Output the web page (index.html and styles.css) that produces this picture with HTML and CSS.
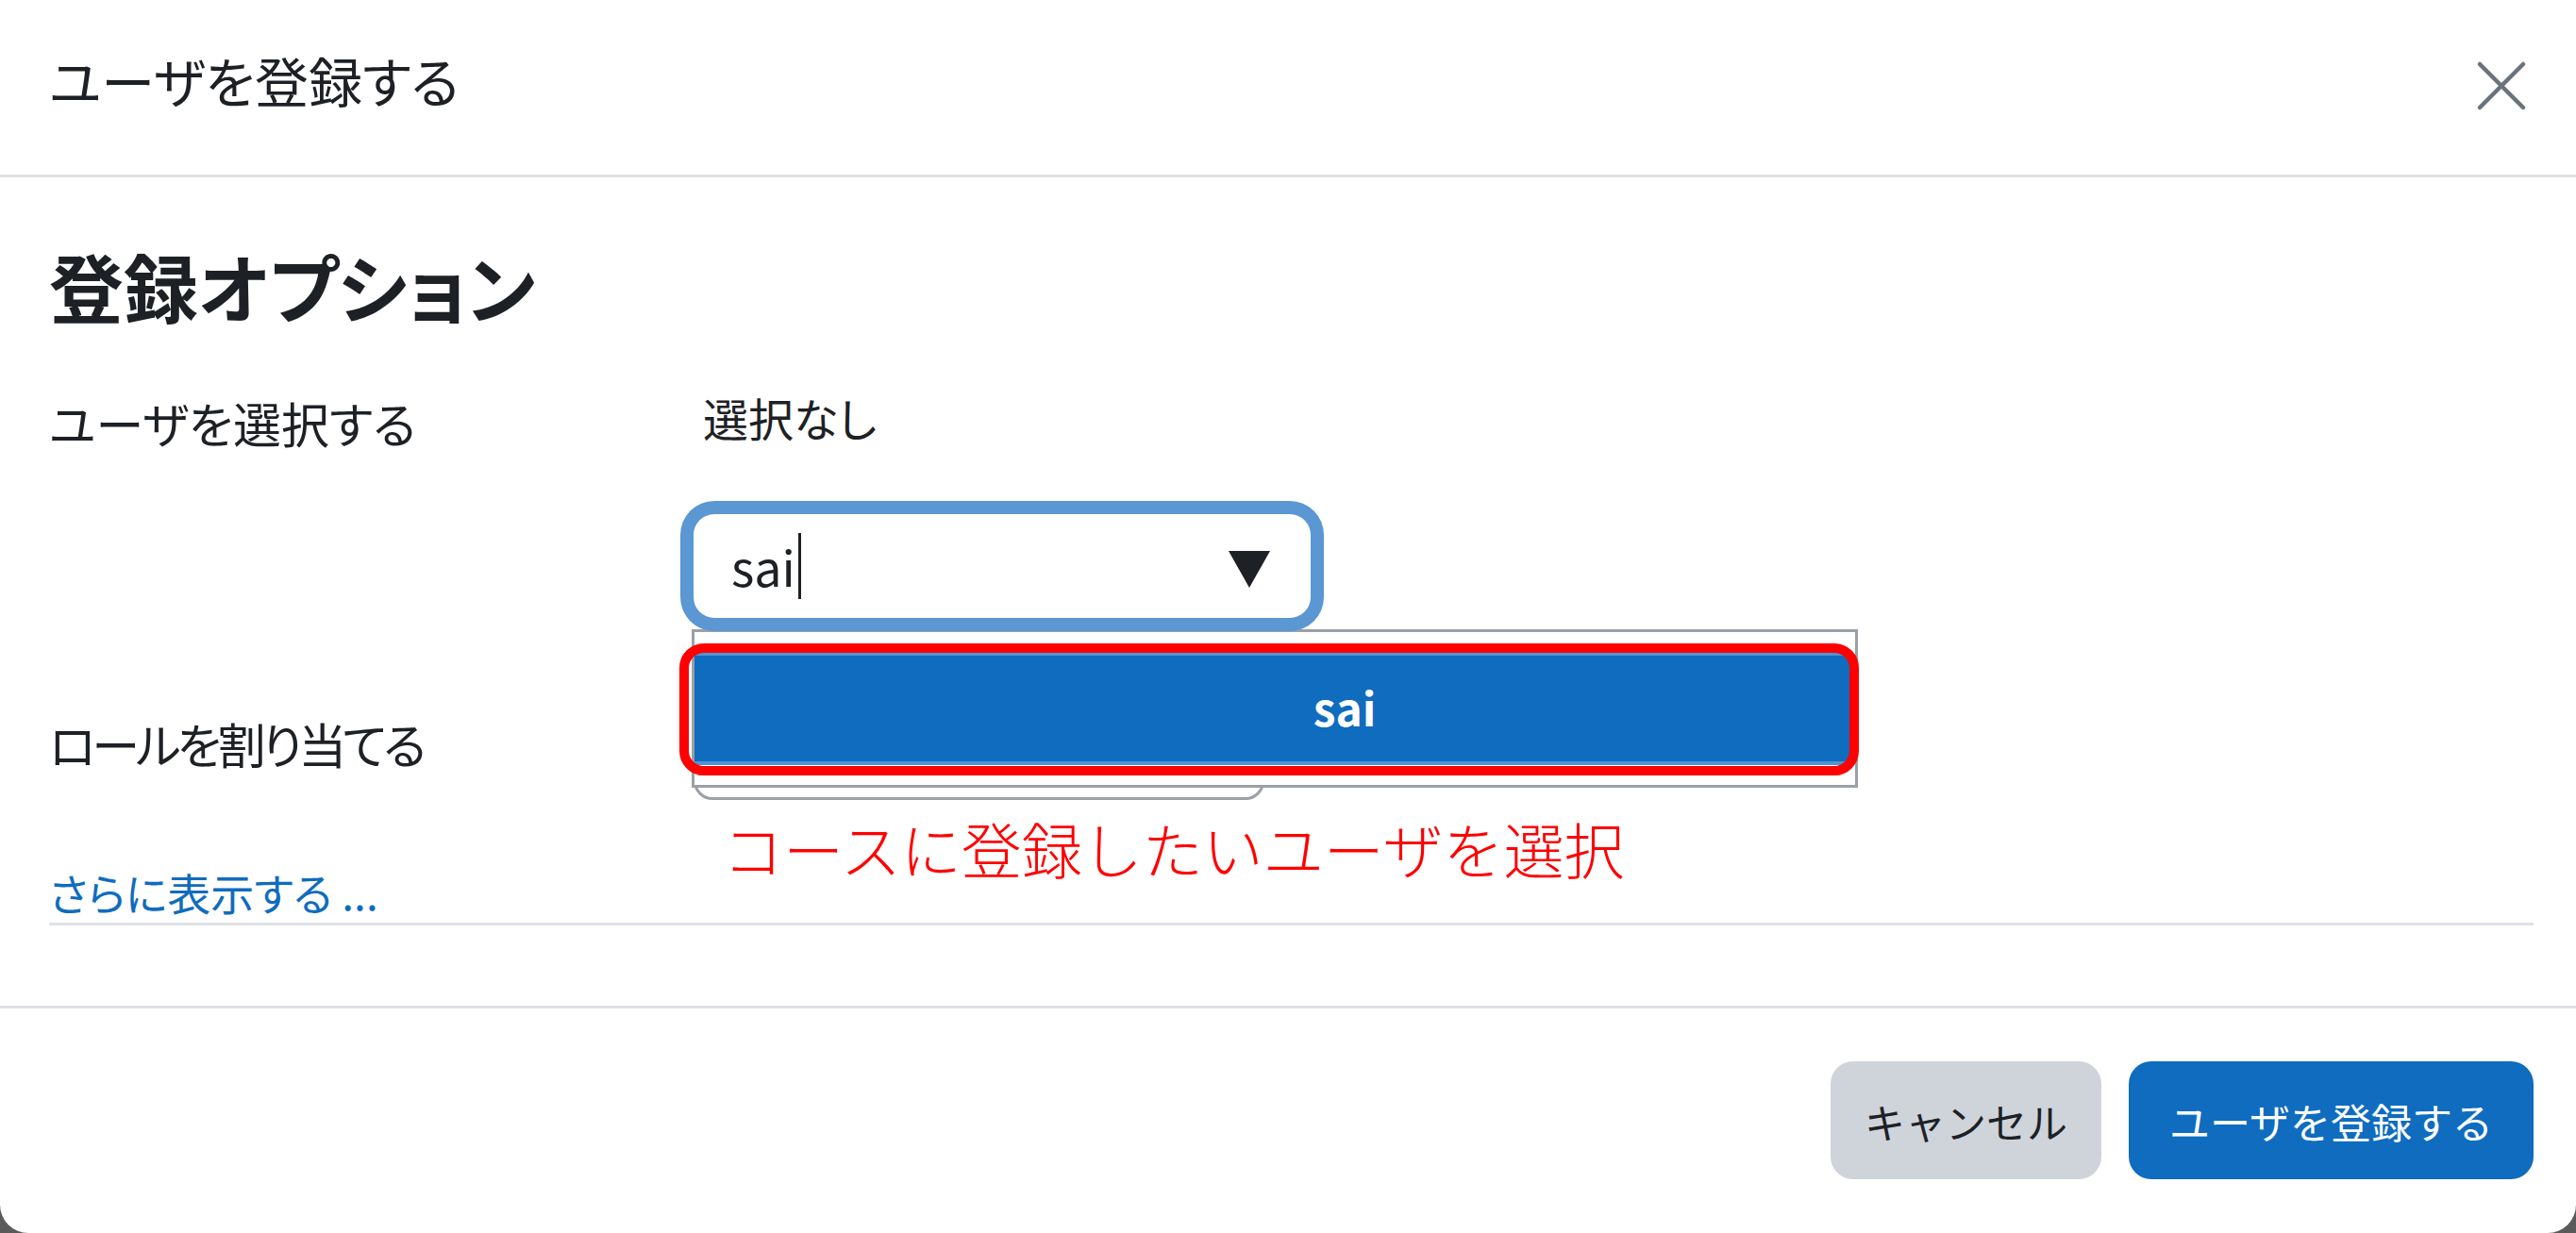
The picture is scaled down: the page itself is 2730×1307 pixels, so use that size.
FILE: index.html
```html
<!DOCTYPE html>
<html lang="ja">
<head>
  <meta charset="UTF-8" />
  <meta name="viewport" content="width=device-width, initial-scale=1.0" />
  <title>ユーザを登録する</title>
  <link rel="stylesheet" href="styles.css">
</head>
<body>
  <div class="modal">
    <div class="modal-header">
      <h5 class="modal-title">ユーザを登録する</h5>
      <button class="btn-close" aria-label="閉じる">
        <svg viewBox="0 0 54 54" width="54" height="54">
          <path d="M4 4 L50 50 M50 4 L4 50" stroke="#6a737b" stroke-width="4.5" stroke-linecap="round" />
        </svg>
      </button>
    </div>

    <div class="modal-body">
      <h3 class="section-title">登録オプション</h3>

      <div class="form-row row-user">
        <label class="form-label">ユーザを選択する</label>
        <div class="form-col">
          <div class="selection">選択なし</div>
          <div class="autocomplete">
            <div class="search-input">
              <span class="typed">sai</span><span class="caret"></span>
              <svg class="down-arrow" viewBox="0 0 44 39" width="44" height="39">
                <polygon points="0,0 44,0 22,39" fill="#1d2125" />
              </svg>
            </div>
            <ul class="suggestions">
              <li class="suggestion active">sai</li>
            </ul>
            <div class="callout"></div>
            <p class="note">コースに登録したいユーザを選択</p>
          </div>
        </div>
      </div>

      <div class="form-row row-role">
        <label class="form-label narrow">ロールを割り当てる</label>
        <div class="form-col">
          <div class="role-select"></div>
        </div>
      </div>

      <div class="more"><a href="#">さらに表示する ...</a></div>
    </div>

    <div class="modal-footer">
      <button class="btn btn-secondary">キャンセル</button>
      <button class="btn btn-primary">ユーザを登録する</button>
    </div>
  </div>
</body>
</html>
```

FILE: styles.css
```css
* {
  box-sizing: border-box;
}

html, body {
  margin: 0;
  padding: 0;
}

body {
  background: #5a5a5a;
  font-family: "Noto Sans CJK JP", "Noto Sans", sans-serif;
  font-feature-settings: "palt";
  color: #1d2125;
}

.modal {
  width: 2730px;
  height: 1307px;
  background: #fff;
  border-radius: 0 0 30px 30px;
  display: flex;
  flex-direction: column;
  overflow: hidden;
}

.modal-header {
  height: 188px;
  flex-shrink: 0;
  border-bottom: 3px solid #dee2e6;
  display: flex;
  justify-content: space-between;
  align-items: flex-start;
  padding: 52px 52px 0 52px;
}

.modal-title {
  margin: 0;
  font-size: 57px;
  font-weight: 400;
  line-height: 64px;
}

.btn-close {
  border: none;
  background: none;
  padding: 0;
  margin-top: 12px;
  width: 54px;
  height: 54px;
  cursor: pointer;
}

.btn-close svg {
  display: block;
}

.modal-body {
  height: 878px;
  flex-shrink: 0;
  padding: 0 45px 0 52px;
}

.section-title {
  margin: 70px 0 0;
  font-size: 79px;
  font-weight: 700;
  line-height: 90px;
}

.form-row {
  display: flex;
  align-items: flex-start;
}

.form-label {
  width: 683px;
  flex-shrink: 0;
  font-size: 51px;
  line-height: 60px;
}

.form-label.narrow {
  letter-spacing: -4px;
}

.row-user {
  margin-top: 64px;
}

.row-user .form-label {
  padding-top: 6px;
}

.selection {
  font-size: 48px;
  line-height: 60px;
  padding-left: 10px;
}

.autocomplete {
  position: relative;
  margin-top: 73px;
}

.search-input {
  position: relative;
  z-index: 2;
  width: 654px;
  height: 110px;
  background: #fff;
  border-radius: 22px;
  box-shadow: 0 0 0 14px #5a97d3;
  display: flex;
  align-items: center;
  padding: 0 43px 0 40px;
}

.typed {
  font-size: 52px;
  line-height: 60px;
  color: #1d2125;
}

.caret {
  display: inline-block;
  width: 3px;
  height: 70px;
  margin-left: 3px;
  background: #1d2125;
}

.down-arrow {
  margin-left: auto;
  margin-top: 6px;
}

.suggestions {
  position: absolute;
  z-index: 1;
  top: 122px;
  left: -2px;
  width: 1236px;
  height: 168px;
  margin: 0;
  padding: 21px 4px 0 0;
  list-style: none;
  background: #fff;
  border: 3px solid #9aa0a6;
}

.suggestion {
  height: 120px;
  background: #0f6cbf;
  border-top: 4px solid #4f94d4;
  border-bottom: 4px solid #4f94d4;
  color: #fff;
  font-size: 48px;
  font-weight: 700;
  line-height: 108px;
  text-align: center;
  padding-left: 152px;
}

.callout {
  position: absolute;
  z-index: 3;
  top: 137px;
  left: -15px;
  width: 1250px;
  height: 140px;
  border: 10px solid #ff0000;
  border-radius: 26px;
}

.note {
  position: absolute;
  z-index: 3;
  top: 318px;
  left: 31px;
  margin: 0;
  white-space: nowrap;
  color: #ff0000;
  font-size: 64px;
  font-weight: 300;
  line-height: 70px;
  font-feature-settings: normal;
}

.row-role {
  margin-top: 83px;
}

.row-role .form-label {
  padding-top: 20px;
}

.role-select {
  width: 605px;
  height: 110px;
  border: 3px solid #9aa0a6;
  border-radius: 20px;
  background: #fff;
}

.more {
  margin-top: 67px;
  padding-bottom: 3px;
  border-bottom: 3px solid #dee2e6;
  font-size: 46px;
  line-height: 60px;
}

.more a {
  color: #0f6cbf;
  text-decoration: none;
}

.modal-footer {
  flex: 1;
  border-top: 3px solid #dee2e6;
  display: flex;
  justify-content: flex-end;
  align-items: flex-start;
  gap: 29px;
  padding: 56px 45px 0 0;
}

.btn {
  height: 125px;
  border: none;
  border-radius: 24px;
  font-family: inherit;
  font-size: 43px;
  cursor: pointer;
}

.btn-secondary {
  width: 287px;
  background: #ced4da;
  color: #1d2125;
}

.btn-primary {
  width: 429px;
  background: #0f6cbf;
  color: #fff;
}
```
